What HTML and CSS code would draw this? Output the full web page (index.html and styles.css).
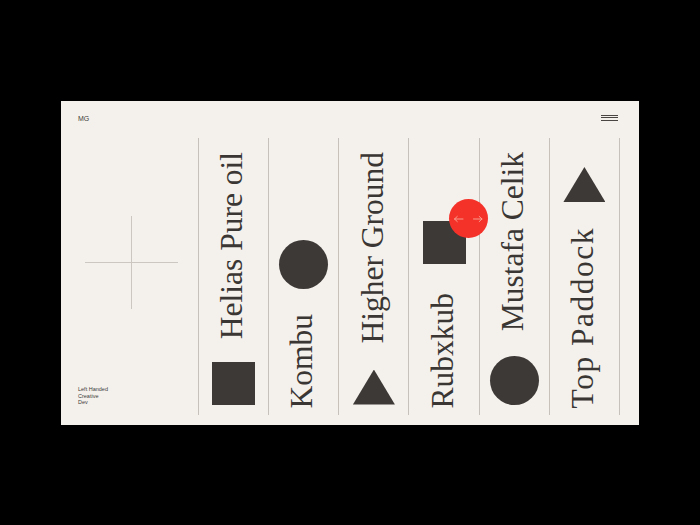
FILE: index.html
```html
<!DOCTYPE html>
<html lang="en">
<head>
<meta charset="utf-8">
<title>MG — Left Handed Creative Dev</title>
<link rel="stylesheet" href="styles.css">
</head>
<body>
<div class="card">
  <aside class="side">
    <div class="logo">MG</div>
    <div class="cross-wrap"><div class="cross"></div></div>
    <p class="tagline">Left Handed<br>Creative<br>Dev</p>
  </aside>
  <main class="main">
    <header class="topbar">
      <div class="menu"><span></span><span></span><span></span></div>
    </header>
    <div class="cols">
      <div class="col">
        <h2 class="title">Helias Pure oil</h2>
        <div class="shape square"></div>
      </div>
      <div class="col col--end">
        <div class="shape circle"></div>
        <h2 class="title">Kombu</h2>
      </div>
      <div class="col">
        <h2 class="title">Higher Ground</h2>
        <div class="shape triangle"></div>
      </div>
      <div class="col col--end">
        <div class="shape square square--badge">
          <div class="badge">
            <svg width="39" height="39" viewBox="0 0 39 39" fill="none" stroke="#f9a896" stroke-width="0.9" stroke-linecap="round" stroke-linejoin="round">
              <path d="M5.5 20H14M8.3 17.4 5.5 20l2.8 2.6"/>
              <path d="M24.5 20H33M30.2 17.4 33 20l-2.8 2.6"/>
            </svg>
          </div>
        </div>
        <h2 class="title">Rubxkub</h2>
      </div>
      <div class="col">
        <h2 class="title">Mustafa Celik</h2>
        <div class="shape circle"></div>
      </div>
      <div class="col col--end">
        <div class="shape triangle"></div>
        <h2 class="title title--wide">Top Paddock</h2>
      </div>
    </div>
  </main>
</div>
</body>
</html>
```

FILE: styles.css
```css
* {
  box-sizing: border-box;
  margin: 0;
  padding: 0;
}

html,
body {
  height: 100%;
}

body {
  background: #000;
  display: flex;
  align-items: center;
  justify-content: center;
  font-family: "Liberation Sans", Arial, sans-serif;
  color: #403c3a;
}

.card {
  width: 578px;
  height: 324px;
  background: #f4f1ec;
  display: flex;
}

/* left sidebar */
.side {
  width: 137px;
  flex: none;
  display: flex;
  flex-direction: column;
  padding: 14px 0 19px 17px;
}

.logo {
  font-size: 7px;
  line-height: 8px;
  letter-spacing: -0.2px;
}

.cross-wrap {
  flex: 1;
  display: flex;
  align-items: center;
  padding: 17px 0 0 7px;
}

.cross {
  width: 93px;
  height: 93px;
  background:
    linear-gradient(#ccc7c1, #ccc7c1) center / 1px 100% no-repeat,
    linear-gradient(#ccc7c1, #ccc7c1) center / 100% 1px no-repeat;
}

.tagline {
  font-size: 5.5px;
  line-height: 6.5px;
}

/* main area */
.main {
  flex: 1;
  display: flex;
  flex-direction: column;
  padding: 0 19px 10px 0;
}

.topbar {
  height: 37px;
  flex: none;
  display: flex;
  justify-content: flex-end;
  padding-top: 14px;
}

.menu {
  width: 17px;
  height: 6px;
  margin-right: 2px;
  display: flex;
  flex-direction: column;
  justify-content: space-between;
}

.menu span {
  height: 1px;
  background: #4a4644;
}

.cols {
  flex: 1;
  display: grid;
  grid-template-columns: repeat(6, 1fr);
  border-right: 1px solid #c6c1bb;
}

.col {
  border-left: 1px solid #c6c1bb;
  display: flex;
  flex-direction: column;
  align-items: center;
  justify-content: space-between;
  padding: 14px 0 10px;
}

.col--end {
  justify-content: flex-end;
  gap: 25px;
  padding-bottom: 6px;
}

.title {
  font-family: "Liberation Serif", "Times New Roman", serif;
  font-weight: 400;
  font-size: 31.5px;
  line-height: 1;
  color: #3a3634;
  white-space: nowrap;
  writing-mode: vertical-rl;
  transform: rotate(180deg);
  padding-left: 3px;
}

.title--wide {
  letter-spacing: 1.5px;
}

/* shapes */
.shape {
  flex: none;
  background: #3d3937;
}

.square {
  width: 43px;
  height: 43px;
}

.square--badge {
  position: relative;
  margin-bottom: 4px;
}

.circle {
  width: 49px;
  height: 49px;
  border-radius: 50%;
}

.triangle {
  width: 42px;
  height: 35px;
  clip-path: polygon(50% 0, 100% 100%, 0 100%);
}

.badge {
  position: absolute;
  left: 26px;
  top: -22px;
  width: 39px;
  height: 39px;
  border-radius: 50%;
  background: #f5322a;
}

.badge svg {
  display: block;
}
```
